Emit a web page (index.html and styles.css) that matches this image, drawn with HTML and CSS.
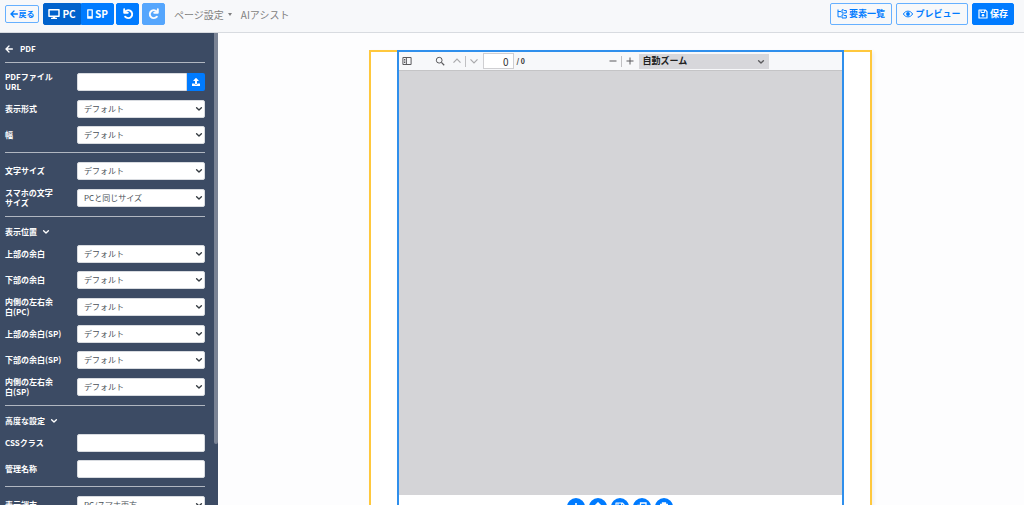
FILE: index.html
```
<!DOCTYPE html>
<html lang="ja">
<head>
    <meta charset="UTF-8">
    <meta name="viewport" content="width=device-width, initial-scale=1.0">
    <title>ページ編集</title>
    <link rel="stylesheet" href="styles.css">
</head>
<body>
    <svg class="sprite" aria-hidden="true">
        <symbol id="chevron" viewBox="0 0 8 8"><path d="M1.6 2.8 4 5l2.4-2.200" fill="none" stroke="currentColor" stroke-width="1.400" stroke-linecap="round" stroke-linejoin="round"/></symbol>
        <symbol id="arrow-left" viewBox="0 0 10 10"><path d="M5 1.200 1.200 5 5 8.800M1.500 5h7.800" fill="none" stroke="currentColor" stroke-width="1.600" stroke-linecap="round" stroke-linejoin="round"/></symbol>
        <symbol id="upload" viewBox="0 0 512 512"><path d="M296 384h-80c-13 0-24-11-24-24V192h-88c-18 0-27-21-14-34L242 6c8-8 20-8 28 0l152 152c13 13 4 34-14 34h-88v168c0 13-11 24-24 24zm216-8v112c0 13-11 24-24 24H24c-13 0-24-11-24-24V376c0-13 11-24 24-24h136v8c0 31 25 56 56 56h80c31 0 56-25 56-56v-8h136c13 0 24 11 24 24z" fill="currentColor"/></symbol>
        <symbol id="rotate" viewBox="0 0 12 12"><path d="M2.200 1.200v3.600h3.600M2.600 4.400a4 4 0 1 1 .5 4.300" fill="none" stroke="currentColor" stroke-width="1.900" stroke-linecap="round" stroke-linejoin="round"/></symbol>
        <symbol id="save" viewBox="0 0 10 10"><path d="M1 1h6.300L9 2.700V9H1z" fill="none" stroke="currentColor" stroke-width="1.200" stroke-linejoin="round"/><path d="M3 1v2.500h3.600V1" fill="none" stroke="currentColor"/><circle cx="5" cy="6.200" r="1.300" fill="currentColor"/></symbol>
    </svg>

    <header class="topbar">
        <a class="btn btn-outline btn-back" href="#"><svg><use href="#arrow-left"/></svg>戻る</a>
        <div class="btn-group">
            <button class="btn btn-pc active" type="button">
                <svg class="icon-pc" viewBox="0 0 12 10"><path d="M1 .8h10v6.400H1z" fill="none" stroke="currentColor" stroke-width="1.500" stroke-linejoin="round"/><path d="M5 7.500h2l.4 1.300H9V10H3V8.800h1.600z" fill="currentColor"/></svg>PC
            </button>
            <button class="btn btn-sp" type="button">
                <svg class="icon-sp" viewBox="0 0 6 10"><path d="M.8.8h4.400v8.400H.8z" fill="none" stroke="currentColor" stroke-width="1.300" stroke-linejoin="round"/><path d="M1 7.200h4V9H1z" fill="currentColor"/></svg>SP
            </button>
        </div>
        <button class="btn btn-icon" type="button" aria-label="元に戻す"><svg><use href="#rotate"/></svg></button>
        <button class="btn btn-icon btn-redo" type="button" aria-label="やり直す" disabled><svg><use href="#rotate"/></svg></button>
        <nav class="menu">
            <a class="dropdown" href="#">ページ設定</a>
            <a href="#">AIアシスト</a>
        </nav>
        <div class="actions">
            <button class="btn btn-outline btn-list" type="button">
                <svg viewBox="0 0 10 10"><path d="M1 .5v7.300h3M1 2.500h3M5 .8h1.500l.6.700H9.300V4H5zM5 5.800h1.500l.6.700h2.200V9H5z" fill="none" stroke="currentColor" stroke-width="1" stroke-linejoin="round"/></svg>要素一覧
            </button>
            <button class="btn btn-outline btn-preview" type="button">
                <svg viewBox="0 0 10 10"><path d="M.4 5C2.400 1.200 7.600 1.200 9.600 5 7.600 8.800 2.400 8.800.4 5z" fill="none" stroke="currentColor" stroke-width="1"/><circle cx="5" cy="5" r="1.900" fill="currentColor"/></svg>プレビュー
            </button>
            <button class="btn btn-save" type="button"><svg><use href="#save"/></svg>保存</button>
        </div>
    </header>

    <div class="editor">
        <aside class="sidebar">
            <form class="settings">
                <h1><a href="#" aria-label="戻る"><svg><use href="#arrow-left"/></svg></a>PDF</h1>
                <hr>
                <div class="row">
                    <label for="pdf-url">PDFファイル<br>URL</label>
                    <div class="input-group">
                        <input type="text" id="pdf-url">
                        <button type="button" aria-label="アップロード"><svg><use href="#upload"/></svg></button>
                    </div>
                </div>
                <div class="row">
                    <label for="format">表示形式</label>
                    <div class="select"><select id="format"><option>デフォルト</option></select><svg><use href="#chevron"/></svg></div>
                </div>
                <div class="row">
                    <label for="width">幅</label>
                    <div class="select"><select id="width"><option>デフォルト</option></select><svg><use href="#chevron"/></svg></div>
                </div>
                <hr>
                <div class="row">
                    <label for="font-size">文字サイズ</label>
                    <div class="select"><select id="font-size"><option>デフォルト</option></select><svg><use href="#chevron"/></svg></div>
                </div>
                <div class="row">
                    <label for="font-size-sp">スマホの文字<br>サイズ</label>
                    <div class="select"><select id="font-size-sp"><option>PCと同じサイズ</option></select><svg><use href="#chevron"/></svg></div>
                </div>
                <hr>
                <h2>表示位置<svg><use href="#chevron"/></svg></h2>
                <div class="row">
                    <label for="top">上部の余白</label>
                    <div class="select"><select id="top"><option>デフォルト</option></select><svg><use href="#chevron"/></svg></div>
                </div>
                <div class="row">
                    <label for="bottom">下部の余白</label>
                    <div class="select"><select id="bottom"><option>デフォルト</option></select><svg><use href="#chevron"/></svg></div>
                </div>
                <div class="row">
                    <label for="inner">内側の左右余<br>白(PC)</label>
                    <div class="select"><select id="inner"><option>デフォルト</option></select><svg><use href="#chevron"/></svg></div>
                </div>
                <div class="row">
                    <label for="top-sp">上部の余白(SP)</label>
                    <div class="select"><select id="top-sp"><option>デフォルト</option></select><svg><use href="#chevron"/></svg></div>
                </div>
                <div class="row">
                    <label for="bottom-sp">下部の余白(SP)</label>
                    <div class="select"><select id="bottom-sp"><option>デフォルト</option></select><svg><use href="#chevron"/></svg></div>
                </div>
                <div class="row">
                    <label for="inner-sp">内側の左右余<br>白(SP)</label>
                    <div class="select"><select id="inner-sp"><option>デフォルト</option></select><svg><use href="#chevron"/></svg></div>
                </div>
                <hr>
                <h2>高度な設定<svg><use href="#chevron"/></svg></h2>
                <div class="row">
                    <label for="css-class">CSSクラス</label>
                    <input type="text" id="css-class">
                </div>
                <div class="row">
                    <label for="name">管理名称</label>
                    <input type="text" id="name">
                </div>
                <hr>
                <div class="row">
                    <label for="device">表示端末</label>
                    <div class="select"><select id="device"><option>PC/スマホ両方</option></select><svg><use href="#chevron"/></svg></div>
                </div>
            </form>
            <div class="scroll-thumb"></div>
        </aside>

        <main class="canvas">
            <div class="section">
                <div class="element">
                    <div class="viewer">
                        <div class="viewer-bar">
                            <div class="tools tools-left">
                                <button type="button" aria-label="サイドバー"><svg viewBox="0 0 10 10"><path d="M.9 1.500h8.200v7H.9zM4.400 1.500v7M2 3.500h1.300M2 5h1.300M2 6.500h1.300" fill="none" stroke="currentColor" stroke-width="1"/></svg></button>
                                <button class="search" type="button" aria-label="検索"><svg viewBox="0 0 10 10"><circle cx="4.200" cy="4.200" r="2.900" fill="none" stroke="currentColor" stroke-width="1"/><path d="m6.400 6.400 2.800 2.800" stroke="currentColor" stroke-width="1.300"/></svg></button>
                                <button class="muted" type="button" aria-label="前へ"><svg viewBox="0 0 10 10"><path d="m1.500 6.700 3.500-3.500 3.500 3.500" fill="none" stroke="currentColor" stroke-width="1.200"/></svg></button>
                                <span class="sep"></span>
                                <button class="muted" type="button" aria-label="次へ"><svg viewBox="0 0 10 10"><path d="m1.500 3.300 3.500 3.500 3.500-3.500" fill="none" stroke="currentColor" stroke-width="1.200"/></svg></button>
                                <input class="page-number" type="text" value="0" aria-label="ページ">
                                <span class="page-total">/ 0</span>
                            </div>
                            <div class="tools tools-zoom">
                                <button type="button" aria-label="縮小"><svg viewBox="0 0 10 10"><path d="M1.500 5h7" stroke="currentColor" stroke-width="1"/></svg></button>
                                <span class="sep"></span>
                                <button type="button" aria-label="拡大"><svg viewBox="0 0 10 10"><path d="M1.500 5h7M5 1.500v7" stroke="currentColor" stroke-width="1"/></svg></button>
                                <div class="select zoom"><select aria-label="ズーム"><option>自動ズーム</option></select><svg><use href="#chevron"/></svg></div>
                            </div>
                        </div>
                        <div class="viewer-body"></div>
                    </div>
                    <div class="element-actions">
                        <button type="button" aria-label="追加"><svg viewBox="0 0 10 10"><path d="M5 1v8M1 5h8" stroke="currentColor" stroke-width="1.600"/></svg></button>
                        <button type="button" aria-label="移動"><svg viewBox="0 0 10 10"><path d="M5 1v8M2.500 3.500 5 1l2.500 2.500M2.500 6.500 5 9l2.500-2.500" fill="none" stroke="currentColor" stroke-width="1.500"/></svg></button>
                        <button type="button" aria-label="保存"><svg><use href="#save"/></svg></button>
                        <button type="button" aria-label="複製"><svg viewBox="0 0 10 10"><path d="M3.500 1H9v5.500H3.500zM6.500 6.500V9H1V3.500h2.500" fill="none" stroke="currentColor" stroke-width="1.300"/></svg></button>
                        <button type="button" aria-label="削除"><svg viewBox="0 0 10 10"><path d="M1 2.300h8M3.500 2V1h3v1M2 3l.5 6h5L8 3" fill="none" stroke="currentColor" stroke-width="1.300"/></svg></button>
                    </div>
                </div>
            </div>
        </main>
    </div>
</body>
</html>
```
FILE: styles.css
```
:root {
    --blue: #007bff;
    --blue-dark: #0062cc;
    --sidebar-bg: #3c4b64;
    --bar-bg: #f7f8fa;
    --text-color: #495057;
    --yellow: #ffc83d;
}

* {
    box-sizing: border-box;
}

body {
    display: flex;
    flex-direction: column;
    height: 100vh;
    margin: 0;
    overflow: hidden;
    background: #fdfdfe;
    color: var(--text-color);
    font-family: "Noto Sans CJK JP", sans-serif;
    font-size: 8px;
}

button,
input,
select {
    margin: 0;
    padding: 0;
    border: none;
    font: inherit;
    color: inherit;
}

button {
    cursor: pointer;
}

a {
    color: inherit;
    text-decoration: none;
}

svg {
    flex: none;
    width: 10px;
    height: 10px;
}

.sprite {
    position: absolute;
    width: 0;
    height: 0;
}

/* top bar */
.topbar {
    display: flex;
    flex: none;
    align-items: center;
    height: 33px;
    padding: 0 10px 4px 5px;
    background: var(--bar-bg);
    border-bottom: 1px solid #d8dbe0;
}

.btn {
    display: flex;
    align-items: center;
    justify-content: center;
    gap: 2px;
    height: 22px;
    padding: 0;
    border: 1px solid var(--blue);
    border-radius: 2px;
    background: var(--blue);
    color: #fff;
    font-size: 9px;
    font-weight: bold;
    line-height: 12px;
    white-space: nowrap;
}

.btn-outline {
    background: var(--bar-bg);
    border-color: #66b0ff;
    color: var(--blue);
}

.btn-back {
    width: 34px;
    height: 18px;
    gap: 1px;
    font-size: 8px;
}

.btn-back svg {
    width: 8px;
    height: 8px;
}

.btn-group {
    display: flex;
    margin: 0 2px 0 4px;
}

.btn-pc {
    width: 38px;
    border-radius: 2px 0 0 2px;
    font-size: 10px;
}

.btn-sp {
    width: 33px;
    border-radius: 0 2px 2px 0;
    font-size: 10px;
}

.btn.active {
    background: var(--blue-dark);
    border-color: var(--blue-dark);
}

.icon-pc {
    width: 12px;
}

.icon-sp {
    width: 6px;
}

.btn-icon {
    width: 23px;
}

.btn-icon svg {
    width: 12px;
    height: 12px;
}

.btn-redo {
    margin-left: 3px;
    opacity: 0.65;
}

.btn-redo svg {
    transform: scaleX(-1);
}

.btn-list {
    width: 62px;
}

.btn-preview {
    width: 72px;
}

.btn-save {
    width: 42px;
}

.menu {
    display: flex;
    gap: 9px;
    margin-left: 9px;
    color: #7f7f80;
    font-size: 10px;
}

.dropdown {
    display: flex;
    align-items: center;
    gap: 4px;
}

.dropdown::after {
    content: "";
    border: 2px solid transparent;
    border-top: 3px solid #7f7f80;
    border-bottom: 0;
}

.actions {
    display: flex;
    gap: 4px;
    margin-left: auto;
}

/* settings sidebar */
.editor {
    display: flex;
    flex: 1;
    min-height: 0;
}

.sidebar {
    position: relative;
    flex: none;
    width: 218px;
    overflow: hidden;
    background: var(--sidebar-bg);
    color: #fff;
}

.scroll-thumb {
    position: absolute;
    top: 0;
    right: 0;
    width: 4px;
    height: 87%;
    background: #7b8495;
    border-radius: 0 0 2px 2px;
}

.settings {
    padding: 10px 13px 0 5px;
}

.settings h1,
.settings h2 {
    display: flex;
    align-items: center;
    height: 11px;
    margin: 0 0 8px;
    font-size: 8px;
    font-weight: bold;
}

.settings h1 a {
    display: flex;
    margin-right: 7px;
}

.settings h1 svg {
    width: 8px;
    height: 8px;
}

.settings h2 svg {
    width: 8px;
    height: 8px;
    margin-left: 5px;
}

.settings hr {
    height: 1px;
    margin: 0 0 9px;
    border: none;
    background: #b1b7c1;
}

.row {
    display: grid;
    grid-template-columns: 64px 1fr;
    column-gap: 8px;
    align-items: center;
    margin-bottom: 8px;
}

.row label {
    font-weight: bold;
    line-height: 10px;
    white-space: nowrap;
}

.row input,
.row select {
    width: 100%;
    min-width: 0;
    height: 18px;
    padding: 0 6px 2px;
    border: 1px solid #d8dbe0;
    border-radius: 2px;
    background: #fff;
    color: var(--text-color);
}

.input-group {
    display: flex;
}

.input-group input {
    border-radius: 2px 0 0 2px;
}

.input-group button {
    display: flex;
    flex: none;
    align-items: center;
    justify-content: center;
    width: 18px;
    background: var(--blue);
    border-radius: 0 2px 2px 0;
    color: #fff;
}

.input-group svg {
    width: 8px;
    height: 8px;
}

.select {
    position: relative;
}

.select select {
    appearance: none;
}

.select svg {
    position: absolute;
    top: 5px;
    right: 2px;
    width: 8px;
    height: 8px;
    color: #343a40;
    pointer-events: none;
}

/* page canvas */
.canvas {
    display: flex;
    flex: 1;
    justify-content: center;
    padding: 17px 29px 0 27px;
    overflow: hidden;
}

.section {
    display: flex;
    flex: 0 1 503px;
    justify-content: center;
    border: solid var(--yellow);
    border-width: 2px 2px 0;
    box-shadow: 2px 2px 4px rgba(0, 0, 0, 0.06);
    background: #fff;
}

/* the selected element's frame covers the section's top border */
.element {
    flex: 0 1 447px;
    margin-top: -2px;
    border: solid #2f8fec;
    border-width: 2px 2px 0;
}

.viewer-bar {
    display: flex;
    align-items: center;
    height: 19px;
    background: var(--bar-bg);
    border-bottom: 1px solid #c4c4c6;
    color: #5b5b5e;
}

.tools {
    display: flex;
    align-items: center;
}

.tools button {
    display: flex;
    padding: 0;
    background: none;
}

.tools-left {
    width: 209px;
    padding-left: 3px;
}

.tools .search {
    margin: 0 7px 0 23px;
}

.tools .muted {
    color: #a9a9ac;
}

.sep {
    width: 1px;
    height: 11px;
    margin: 0 3px;
    background: #c0c0c3;
}

.page-number {
    width: 31px;
    height: 16px;
    margin-left: 4px;
    padding: 0 4px;
    border: 1px solid #cfcfd2;
    background: #fff;
    color: #333;
    font-size: 10px;
    text-align: right;
}

.page-total {
    margin-left: 3px;
    color: #333;
    font-size: 7px;
    font-weight: bold;
    line-height: 8px;
}

.zoom {
    width: 130px;
    margin-left: 4px;
}

.zoom select {
    width: 100%;
    height: 15px;
    padding: 0 4px 2px;
    background: #d7d7db;
    color: #222;
    font-size: 9px;
    font-weight: bold;
}

.zoom svg {
    top: 4px;
    right: 4px;
    color: #5b5b5e;
}

.viewer-body {
    height: 424px;
    background: #d4d4d7;
}

.element-actions {
    display: flex;
    justify-content: center;
    gap: 4px;
    padding-top: 3px;
}

.element-actions button {
    display: flex;
    align-items: center;
    justify-content: center;
    width: 18px;
    height: 18px;
    border-radius: 50%;
    background: var(--blue);
    color: #fff;
}
```
